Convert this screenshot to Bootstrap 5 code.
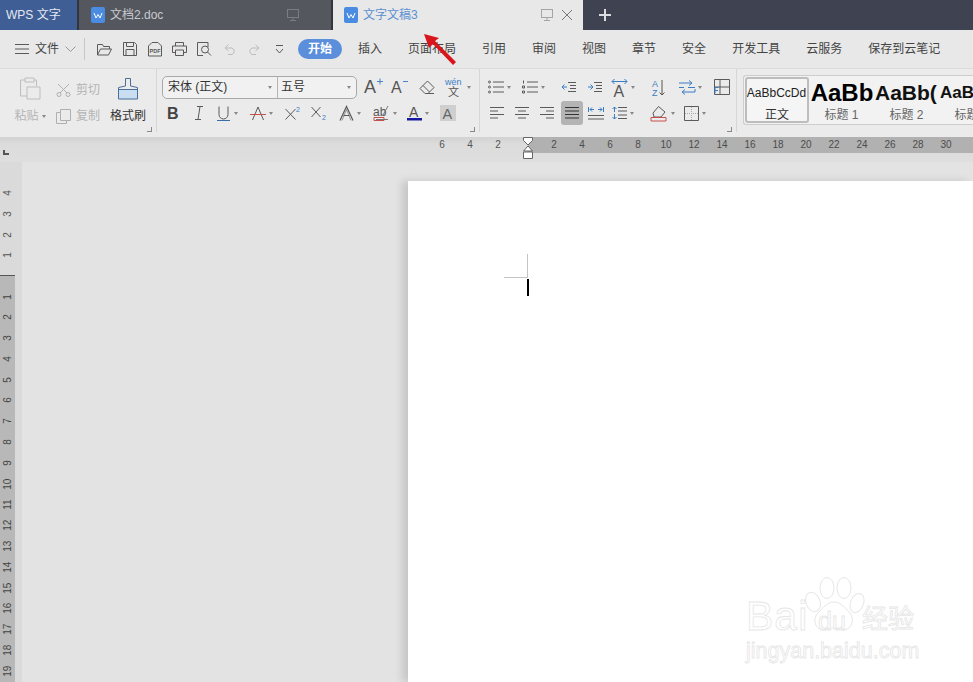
<!DOCTYPE html>
<html lang="zh-CN">
<head>
    <meta charset="UTF-8">
    <meta name="viewport" content="width=device-width, initial-scale=1.0">
    <title>WPS 文字</title>
    <link href="https://cdn.jsdelivr.net/npm/bootstrap@5.3.0/dist/css/bootstrap.min.css" rel="stylesheet">
    <style>
        html, body { margin: 0; height: 100%; overflow: hidden; }
        body { font-family: "Liberation Sans", "Noto Sans CJK SC", sans-serif; font-size: 12px; color: #444; background: #e3e3e3; }
        svg { display: block; flex: none; fill: none; stroke: #5a5a5a; stroke-width: 1; overflow: visible; }
        svg text { stroke: none; font-family: "Liberation Sans", "Noto Sans CJK SC", sans-serif; }
        .app { position: relative; width: 973px; height: 682px; overflow: hidden; }

        /* tab strip */
        .tabbar { height: 30px; background: #3f4250; }
        .tab-app { width: 77px; padding-left: 6px; background: #3f5e95; color: #e4e8f0; }
        .tab-sep { width: 2px; background: #34363f; }
        .tab-doc { width: 252px; padding: 0 32px 0 12px; background: #55575f; color: #c9cacd; }
        .tab-active { width: 250px; padding: 0 10px 0 11px; background: #e8e8e8; color: #5b90d2; }
        .tab-name { margin-left: 5px; }
        .tab-add { margin-left: 15px; }

        /* menu row */
        .menubar { height: 39px; background: #e8e8e8; border-bottom: 1px solid #dbdbdb; padding-left: 15px; color: #444; }
        .menu-file { margin: 0 6px 0 6px; }
        .menu-sep { width: 1px; height: 22px; background: #c6c6c6; margin: 0 7px 0 8px; }
        .qa { width: 25px; }
        .pill { width: 44px; height: 20px; margin: 0 16px 0 6px; border-radius: 10px; background: #5b8edb; color: #fff; font-weight: 700; }
        .menu-item { margin-right: 26px; white-space: nowrap; }

        /* ribbon */
        .ribbon { height: 68px; background: #ebebeb; }
        .rg { position: relative; flex: none; border-right: 1px solid #d6d6d6; height: 63px; }
        .rg-mark::after { content: ""; position: absolute; right: 4px; bottom: 0; width: 5px; height: 5px; border-right: 1px solid #888; border-bottom: 1px solid #888; }
        .rg-clip { width: 157px; padding: 8px 0 0 12px; }
        .rg-font { width: 323px; padding-top: 6px; }
        .rg-para { width: 257px; padding-top: 6px; }
        .muted { color: #b4b4b4; }
        .clip-paste { width: 36px; }
        .clip-small { width: 52px; margin-left: 8px; }
        .clip-brush { width: 40px; color: #333; }
        .clip-line { height: 26px; gap: 5px; }
        .clip-label { margin-top: 2px; line-height: 16px; white-space: nowrap; }
        .combo { width: 195px; height: 23px; margin-left: 5px; border: 1px solid #a9a9a9; border-radius: 5px; background: #f1f1f1; color: #333; }
        .combo-name { width: 115px; padding: 0 5px; border-right: 1px solid #b5b5b5; height: 100%; }
        .combo-size { flex: 1; padding: 0 5px 0 3px; }
        .caret { flex: none; width: 0; height: 0; margin-left: 3px; border-left: 2.5px solid transparent; border-right: 2.5px solid transparent; border-top: 3px solid #888; }
        .combo .caret { margin-left: auto; }
        .row-a { height: 24px; }
        .row-font2 { height: 24px; margin-top: 2px; margin-left: 3px; }
        .row-para2 { height: 24px; margin-top: 2px; margin-left: 4px; }
        .tb { flex: none; width: 25px; height: 24px; display: flex; align-items: center; justify-content: center; }
        .w22 { width: 22px; }
        .w26 { width: 26px; }
        .w28 { width: 28px; }
        .dd { width: 34px; justify-content: flex-start; padding-left: 4px; }
        .dd-wide { padding-left: 7px; }
        .sel { margin-left: 2px; border-radius: 3px; background: #b4b4b4; }
        .styles { flex: 1; min-width: 0; padding: 6px 0 0 6px; }
        .style-box { height: 50px; border: 1px solid #cdcdcd; border-right: 0; border-radius: 3px 0 0 3px; background: #f2f2f2; padding: 1px; overflow: hidden; }
        .style-item { flex: none; width: 65px; height: 46px; overflow: hidden; white-space: nowrap; text-align: center; }
        .style-item.active { width: 64px; border: 2px solid #bdbdbd; border-radius: 3px; background: #f5f5f5; }
        .style-prev { height: 31px; line-height: 32px; color: #111; }
        .style-prev.s0 { height: 29px; margin-left: -1px; font-size: 12px; line-height: 29px; color: #222; }
        .style-prev.s1 { font-size: 24px; font-weight: 700; color: #000; padding-left: 1px; }
        .style-prev.s2 { font-size: 21px; font-weight: 700; color: #111; text-align: left; padding-left: 1px; }
        .style-prev.s3 { font-size: 17px; font-weight: 700; color: #111; text-align: left; padding-left: 1px; }
        .style-name { color: #666; line-height: 14px; }
        .style-item.active .style-name { color: #333; }

        /* rulers */
        .hruler-wrap { height: 25px; background: linear-gradient(#d2d2d2, #dcdcdc 30%, #dedede); }
        .ruler-corner { position: absolute; left: 3px; top: 150px; width: 6px; height: 5px; border-left: 2px solid #555; border-bottom: 2px solid #555; }
        .hruler { height: 16px; font-size: 10px; color: #555; }
        .hr-left { flex: none; width: 528px; padding-left: 428px; }
        .hr-right { flex: 1; min-width: 0; padding-left: 12px; overflow: hidden; background: #b1b1b1; color: #4c4c4c; }
        .hnum { flex: none; width: 28px; text-align: center; line-height: 16px; }
        .hourglass { position: absolute; left: 522px; top: 137px; }
        .main { height: 520px; }
        .vruler { width: 22px; flex: none; background: #dadada; }
        .vr-track { width: 15px; font-size: 10px; color: #555; }
        .vr-top { height: 114px; padding-top: 21px; border-bottom: 1px solid #555; }
        .vr-bottom { height: 406px; padding-top: 10.500px; background: #b8b8b8; color: #444; }
        .vnum { height: 20.800px; writing-mode: vertical-rl; transform: rotate(180deg); text-align: center; line-height: 15px; }
        .canvas { flex: 1; min-width: 0; padding: 19px 0 0 386px; background: #e3e3e3; }
        .page { height: 100%; background: #fff; box-shadow: -6px 0 8px rgba(0, 0, 0, .13); padding: 73px 0 0 96px; }
        .crop { width: 24px; height: 24px; border-right: 1px solid #c4c4c4; border-bottom: 1px solid #c4c4c4; }
        .text-caret { width: 2px; height: 17px; margin: 1px 0 0 23px; background: #000; }

        /* over the picture */
        .arrow { position: absolute; left: 420px; top: 30px; }
        .wm { position: absolute; left: 745px; top: 576px; width: 175px; height: 90px; color: transparent; -webkit-text-stroke: .8px #e6e6e6; }
        .wm-bai { position: absolute; left: 1px; top: 18px; font-size: 41px; line-height: 44px; letter-spacing: 1px; }
        .wm-jing { position: absolute; left: 117px; top: 25px; font-size: 26px; line-height: 32px; font-family: "Noto Sans CJK SC", sans-serif; }
        .wm-du { position: absolute; left: 73px; top: 32px; font-size: 25px; line-height: 26px; }
        .wm-url { position: absolute; left: 1px; top: 63px; font-size: 21.500px; line-height: 24px; white-space: nowrap; }
        .wm-paw { position: absolute; left: 58px; top: 0; }
    </style>
</head>
<body>
<div class="app">

    <!-- Tabs -->
    <div class="tabbar d-flex">
        <div class="tab-app d-flex align-items-center">WPS 文字</div>
        <div class="tab-sep"></div>
        <div class="tab-doc d-flex align-items-center">
            <svg width="14" height="16" viewBox="0 0 14 16" style="stroke:none"><rect width="14" height="16" rx="2" fill="#4a8ce2"/><path d="M3 6l2 5 2-3.500 2 3.500 2-5" fill="none" stroke="#fff"/></svg>
            <span class="tab-name">文档2.doc</span>
            <svg class="ms-auto" width="12" height="12" viewBox="0 0 12 12" style="stroke:#7b7d84"><rect x=".5" y=".5" width="11" height="8"/><path d="M6 8.500v3M3 11.500h6"/></svg>
        </div>
        <div class="tab-sep"></div>
        <div class="tab-active d-flex align-items-center">
            <svg width="14" height="16" viewBox="0 0 14 16" style="stroke:none"><rect width="14" height="16" rx="2" fill="#4a8ce2"/><path d="M3 6l2 5 2-3.500 2 3.500 2-5" fill="none" stroke="#fff"/></svg>
            <span class="tab-name">文字文稿3</span>
            <svg class="ms-auto" width="12" height="12" viewBox="0 0 12 12" style="stroke:#a5a5a5"><rect x=".5" y=".5" width="11" height="8"/><path d="M6 8.500v3M3 11.500h6"/></svg>
            <svg class="ms-2" width="12" height="12" viewBox="0 0 12 12" style="stroke:#777"><path d="M1 1l10 10M11 1L1 11"/></svg>
        </div>
        <div class="tab-add d-flex align-items-center">
            <svg width="14" height="14" viewBox="0 0 14 14" style="stroke:#dcdde0;stroke-width:2"><path d="M7 1v12M1 7h12"/></svg>
        </div>
    </div>

    <!-- Menu -->
    <div class="menubar d-flex align-items-center">
        <svg width="14" height="10" viewBox="0 0 14 10"><path d="M0 .5h14M0 5h14M0 9.500h14"/></svg>
        <span class="menu-file">文件</span>
        <svg width="11" height="6" viewBox="0 0 11 6" style="stroke:#999"><path d="M.5.500l5 5 5-5"/></svg>
        <div class="menu-sep"></div>
        <div class="qa d-flex justify-content-center"><svg width="15" height="13" viewBox="0 0 15 13"><path d="M.5 12V1.500h5l1 2h6V6M.5 12h11l3-6H3.500z"/></svg></div>
        <div class="qa d-flex justify-content-center"><svg width="14" height="14" viewBox="0 0 14 14"><path d="M.5.500h11l2 2v11H.5zM3.500.500v4h7v-4M3 13.500v-6h8v6"/></svg></div>
        <div class="qa d-flex justify-content-center"><svg width="14" height="15" viewBox="0 0 14 15"><path d="M4 .500h6l3.500 3.500v10H.5V4z"/><text x="1.500" y="10.500" font-size="5.500" font-weight="700" fill="#555">PDF</text></svg></div>
        <div class="qa d-flex justify-content-center"><svg width="15" height="14" viewBox="0 0 15 14"><path d="M3.500 4V.5h8V4M3.500 10.500h-3V4h14v6.500h-3M3.500 8h8v5.500h-8z"/></svg></div>
        <div class="qa d-flex justify-content-center"><svg width="15" height="14" viewBox="0 0 15 14"><path d="M11 5V.5H.5v13H6"/><circle cx="8" cy="7.500" r="3.500"/><path d="M10.500 10l3.500 3.500"/></svg></div>
        <div class="qa d-flex justify-content-center"><svg width="13" height="12" viewBox="0 0 13 12" style="stroke:#bcbcbc"><path d="M3 5h6a3.500 3.500 0 0 1 0 6.500H5M5.500 1.500L2 5l3.500 3"/></svg></div>
        <div class="qa d-flex justify-content-center"><svg width="13" height="12" viewBox="0 0 13 12" style="stroke:#bcbcbc"><path d="M10 5H4a3.500 3.500 0 0 0 0 6.500h4M7.500 1.500L11 5 7.500 8"/></svg></div>
        <div class="qa d-flex justify-content-center"><svg width="9" height="9" viewBox="0 0 9 9"><path d="M1 .5h7M1 4l3.500 4L8 4"/></svg></div>
        <div class="pill d-flex align-items-center justify-content-center">开始</div>
        <span class="menu-item">插入</span>
        <span class="menu-item">页面布局</span>
        <span class="menu-item">引用</span>
        <span class="menu-item">审阅</span>
        <span class="menu-item">视图</span>
        <span class="menu-item">章节</span>
        <span class="menu-item">安全</span>
        <span class="menu-item">开发工具</span>
        <span class="menu-item">云服务</span>
        <span class="menu-item">保存到云笔记</span>
    </div>

    <!-- Ribbon -->
    <div class="ribbon d-flex">
        <div class="rg rg-clip rg-mark d-flex">
            <div class="clip-paste d-flex flex-column align-items-center muted">
                <svg width="22" height="23" viewBox="0 0 22 23" style="stroke:#bdbdbd"><path d="M6 3H1.500v16H8M15 3h2.500v6M6 1h9v4H6zM8 10h13v12H8z"/></svg>
                <div class="clip-label d-flex align-items-center mt-2">粘贴<span class="caret"></span></div>
            </div>
            <div class="clip-small muted">
                <div class="clip-line d-flex align-items-center">
                    <svg width="15" height="14" viewBox="0 0 15 14" style="stroke:#b0b0b0"><path d="M2 1l9 9M13 1L4 10"/><circle cx="3" cy="11.500" r="2"/><circle cx="12" cy="11.500" r="2"/></svg>
                    <span>剪切</span>
                </div>
                <div class="clip-line d-flex align-items-center">
                    <svg width="15" height="15" viewBox="0 0 15 15" style="stroke:#b0b0b0"><path d="M4.500.500h10v11h-10zM4.500 3.500h-4v11h10v-3"/></svg>
                    <span>复制</span>
                </div>
            </div>
            <div class="clip-brush d-flex flex-column align-items-center">
                <svg width="22" height="23" viewBox="0 0 22 23"><path d="M1.500 12.500h19V22h-19z" fill="#c9def2" stroke="none"/><path d="M8.500 9V1.500h5V9l7 1.500V22h-19V10.500zM1.500 12.500h19" stroke="#4a6f99"/></svg>
                <div class="clip-label mt-2">格式刷</div>
            </div>
        </div>

        <div class="rg rg-font rg-mark">
            <div class="row-a d-flex align-items-center">
                <div class="combo d-flex align-items-center">
                    <div class="combo-name d-flex align-items-center">宋体 (正文)<span class="caret"></span></div>
                    <div class="combo-size d-flex align-items-center">五号<span class="caret"></span></div>
                </div>
                <div class="tb w26 ms-1"><svg width="20" height="18" viewBox="0 0 20 18"><text x="0" y="15" font-size="18" fill="#555">A</text><path d="M13 3.500h6M16 .5v6" stroke="#4a84c6"/></svg></div>
                <div class="tb w26"><svg width="20" height="18" viewBox="0 0 20 18"><text x="1" y="15" font-size="16" fill="#555">A</text><path d="M13 3.500h5" stroke="#4a84c6"/></svg></div>
                <div class="tb w28"><svg width="16" height="14" viewBox="0 0 16 14"><path d="M6 13.500L1 8.500 8.500 1 15 7.500 9 13.500zM4 5.500l6.500 6.500M6 13.500h9"/></svg></div>
                <div class="tb dd"><svg width="19" height="20" viewBox="0 0 19 20"><text x="0" y="8" font-size="9" fill="#3b7dc4">wén</text><text x="3" y="19" font-size="11" fill="#555">文</text></svg><span class="caret"></span></div>
            </div>
            <div class="row-font2 d-flex align-items-center">
                <div class="tb w26"><svg width="12" height="14" viewBox="0 0 12 14"><text x="0" y="13" font-size="16" font-weight="700" fill="#444">B</text></svg></div>
                <div class="tb w26"><svg width="10" height="14" viewBox="0 0 10 14"><path d="M3 .5h6M1 13.500h6M6 .5L4 13.500"/></svg></div>
                <div class="tb dd"><svg width="15" height="15" viewBox="0 0 15 15"><path d="M3 .5v8a4.500 4.500 0 0 0 9 0v-8"/><path d="M1 14.500h13" stroke="#3a6ea8"/></svg><span class="caret"></span></div>
                <div class="tb dd"><svg width="16" height="15" viewBox="0 0 16 15"><path d="M2.500 14L8 1l5.500 13"/><path d="M0 8.500h16" stroke="#c8504c"/></svg><span class="caret"></span></div>
                <div class="tb w26"><svg width="17" height="14" viewBox="0 0 17 14"><path d="M.5 3l10 10.500M10.500 3l-10 10.500"/><text x="11" y="6" font-size="7" fill="#3b7dc4">2</text></svg></div>
                <div class="tb w26"><svg width="17" height="14" viewBox="0 0 17 14"><path d="M.5 1l9 10M9.500 1l-9 10"/><text x="11" y="14" font-size="7" fill="#3b7dc4">2</text></svg></div>
                <div class="tb dd dd-wide"><svg width="15" height="15" viewBox="0 0 15 15"><path d="M1 14.500L7.500 .5l6.500 14M4.500 9.500h6" stroke-width="1.200"/><path d="M3 14.500l4.500-11 4.500 11" stroke-width=".6"/></svg><span class="caret"></span></div>
                <div class="tb dd dd-wide"><svg width="17" height="16" viewBox="0 0 17 16"><text x="0" y="11" font-size="12" fill="#555">ab</text><path d="M10 10L15 1M3 14.500h12" stroke="#777"/><path d="M1 12.500h10v3H1z" stroke="#c8504c"/></svg><span class="caret"></span></div>
                <div class="tb dd dd-wide"><svg width="15" height="16" viewBox="0 0 15 16"><text x="2" y="11.500" font-size="14" fill="#555">A</text><path d="M0 13h15v2.500H0z" fill="#1616a0" stroke="none"/></svg><span class="caret"></span></div>
                <div class="tb w28"><svg width="16" height="16" viewBox="0 0 16 16" style="stroke:none"><rect width="16" height="16" fill="#cfcfcf"/><text x="2.500" y="13.500" font-size="14.500" fill="#666">A</text></svg></div>
            </div>
        </div>

        <div class="rg rg-para rg-mark">
            <div class="row-a d-flex align-items-center ms-1">
                <div class="tb dd"><svg width="16" height="14" viewBox="0 0 16 14"><path d="M5 2h11M5 7h11M5 12h11"/><circle cx="1.500" cy="2" r="1"/><circle cx="1.500" cy="7" r="1"/><circle cx="1.500" cy="12" r="1"/></svg><span class="caret"></span></div>
                <div class="tb dd"><svg width="16" height="14" viewBox="0 0 16 14"><path d="M5 2h11M5 7h11M5 12h11M1.500.5v3M.5 6h2v2h-2zM.5 11h2v2h-2z"/></svg><span class="caret"></span></div>
                <div class="tb w26 ms-1"><svg width="14" height="12" viewBox="0 0 14 12"><path d="M6 1.500h8M8 4.500h6M8 7.500h6M6 10.500h8"/><path d="M5 6H0M2.500 3.500L0 6l2.500 2.500" stroke="#3b7dc4"/></svg></div>
                <div class="tb"><svg width="14" height="12" viewBox="0 0 14 12"><path d="M6 1.500h8M8 4.500h6M8 7.500h6M6 10.500h8"/><path d="M0 6h5M2.500 3.500L5 6 2.500 8.500" stroke="#3b7dc4"/></svg></div>
                <div class="tb dd"><svg width="17" height="19" viewBox="0 0 17 19"><text x="2.500" y="18.500" font-size="16" fill="#555">A</text><path d="M1 3.500h15M3.500 1L1 3.500 3.500 6M13.500 1L16 3.500 13.500 6" stroke="#3b7dc4"/></svg><span class="caret"></span></div>
                <div class="tb w26 ms-1"><svg width="13" height="17" viewBox="0 0 13 17"><text x="0" y="8" font-size="9" fill="#3b7dc4">A</text><text x="0" y="16.500" font-size="9" fill="#3b7dc4">Z</text><path d="M10 1v15M7.500 13.500L10 16l2.500-2.500" stroke="#555"/></svg></div>
                <div class="tb dd ms-1"><svg width="16" height="15" viewBox="0 0 16 15"><path d="M0 3h13M10 .5L13 3l-3 2.500M0 7.500h5M9 7.500h7M3 12h13v-3M6 9.500L3 12l3 2.500" stroke="#3b7dc4"/></svg><span class="caret"></span></div>
                <div class="tb w26"><svg width="16" height="16" viewBox="0 0 16 16"><path d="M.5 .5h15v15H.5zM.5 8h15M6 .5v15"/><path d="M1 8.500h3.500M1 8.500v6M1 11.500h3" stroke="#3b7dc4"/></svg></div>
            </div>
            <div class="row-para2 d-flex align-items-center">
                <div class="tb"><svg width="14" height="12" viewBox="0 0 14 12"><path d="M0 .5h14M0 4h8M0 7.500h14M0 11h8"/></svg></div>
                <div class="tb"><svg width="14" height="12" viewBox="0 0 14 12"><path d="M0 .5h14M3 4h8M0 7.500h14M3 11h8"/></svg></div>
                <div class="tb"><svg width="14" height="12" viewBox="0 0 14 12"><path d="M0 .5h14M6 4h8M0 7.500h14M6 11h8"/></svg></div>
                <div class="tb w22 sel"><svg width="14" height="12" viewBox="0 0 14 12" style="stroke:#333"><path d="M0 .5h14M0 4h14M0 7.500h14M0 11h14"/></svg></div>
                <div class="tb"><svg width="16" height="14" viewBox="0 0 16 14"><path d="M0 9.500h16M0 13h16"/><path d="M.5 1v5M15.500 1v5M2 3.500h4M4 1.500L2 3.500l2 2M10 3.500h4M12 1.500l2 2-2 2" stroke="#3b7dc4"/></svg></div>
                <div class="tb dd"><svg width="15" height="14" viewBox="0 0 15 14"><path d="M6 1.500h9M6 5h9M6 9h9M6 12.500h9"/><path d="M2.500 1v5M.5 3L2.500 1l2 2M2.500 8v5M.5 11l2 2 2-2" stroke="#3b7dc4"/></svg><span class="caret"></span></div>
                <div class="tb dd ms-1"><svg width="18" height="17" viewBox="0 0 18 17"><path d="M3 8L8.500 1.500 15 7l-4 5H4z"/><path d="M1 12.500h15v3.500H1z" stroke="#c8504c"/></svg><span class="caret"></span></div>
                <div class="tb dd"><svg width="15" height="15" viewBox="0 0 15 15"><path d="M.5 .5h14v14H.5z"/><path d="M7.500 1v13M1 7.500h13" stroke="#aaa" stroke-dasharray="1 1"/></svg><span class="caret"></span></div>
            </div>
        </div>

        <div class="styles">
            <div class="style-box d-flex">
                <div class="style-item active"><div class="style-prev s0">AaBbCcDd</div><div class="style-name">正文</div></div>
                <div class="style-item"><div class="style-prev s1">AaBb</div><div class="style-name">标题 1</div></div>
                <div class="style-item"><div class="style-prev s2">AaBb(</div><div class="style-name">标题 2</div></div>
                <div class="style-item"><div class="style-prev s3">AaB</div><div class="style-name">标题 3</div></div>
            </div>
        </div>
    </div>

    <!-- Horizontal ruler -->
    <div class="hruler-wrap d-flex">
        <div class="hruler hr-left d-flex">
            <span class="hnum">6</span><span class="hnum">4</span><span class="hnum">2</span>
        </div>
        <div class="hruler hr-right d-flex">
            <span class="hnum">2</span><span class="hnum">4</span><span class="hnum">6</span><span class="hnum">8</span><span class="hnum">10</span><span class="hnum">12</span><span class="hnum">14</span><span class="hnum">16</span><span class="hnum">18</span><span class="hnum">20</span><span class="hnum">22</span><span class="hnum">24</span><span class="hnum">26</span><span class="hnum">28</span><span class="hnum">30</span>
        </div>
    </div>
    <div class="ruler-corner"></div>
    <svg class="hourglass" width="12" height="22" viewBox="0 0 12 22" style="stroke:#666"><path d="M1.500 .5h9v3L6 8 1.500 3.500zM6 9l4.500 5H1.500z" fill="#fff"/><path d="M1.500 15h9v6.500h-9z" fill="#fff"/></svg>

    <!-- Left ruler and document -->
    <div class="main d-flex">
        <div class="vruler">
            <div class="vr-track vr-top">
                <div class="vnum">4</div><div class="vnum">3</div><div class="vnum">2</div><div class="vnum">1</div>
            </div>
            <div class="vr-track vr-bottom">
                <div class="vnum">1</div><div class="vnum">2</div><div class="vnum">3</div><div class="vnum">4</div><div class="vnum">5</div><div class="vnum">6</div><div class="vnum">7</div><div class="vnum">8</div><div class="vnum">9</div><div class="vnum">10</div><div class="vnum">11</div><div class="vnum">12</div><div class="vnum">13</div><div class="vnum">14</div><div class="vnum">15</div><div class="vnum">16</div><div class="vnum">17</div><div class="vnum">18</div><div class="vnum">19</div>
            </div>
        </div>
        <div class="canvas">
            <div class="page">
                <div class="crop"></div>
                <div class="text-caret"></div>
            </div>
        </div>
    </div>

    <!-- Red arrow drawn on the screenshot -->
    <svg class="arrow" width="40" height="36" viewBox="0 0 40 36" style="stroke:none"><path d="M4 4l15 4-4 3 21 21-3 3-20-21-4 4z" fill="#d8141c"/></svg>

    <!-- Watermark -->
    <div class="wm">
        <svg class="wm-paw" width="62" height="58" viewBox="0 0 62 58" style="stroke:#e6e6e6"><ellipse cx="10" cy="26" rx="7" ry="10" transform="rotate(-22 10 26)"/><ellipse cx="24" cy="12" rx="7" ry="10.500"/><ellipse cx="41" cy="12" rx="7" ry="10.500"/><ellipse cx="54" cy="27" rx="6.500" ry="10" transform="rotate(22 54 27)"/><path d="M31 26c7 0 11 6 16 11 5 6 2 17-7 17-4 0-6-2-9-2s-6 2-10 2c-9 0-12-11-6-17 5-5 9-11 16-11z"/></svg>
        <span class="wm-bai">Bai</span>
        <span class="wm-du">du</span>
        <span class="wm-jing">经验</span>
        <span class="wm-url">jingyan.baidu.com</span>
    </div>
</div>
<script src="https://cdn.jsdelivr.net/npm/bootstrap@5.3.0/dist/js/bootstrap.bundle.min.js"></script>
</body>
</html>
